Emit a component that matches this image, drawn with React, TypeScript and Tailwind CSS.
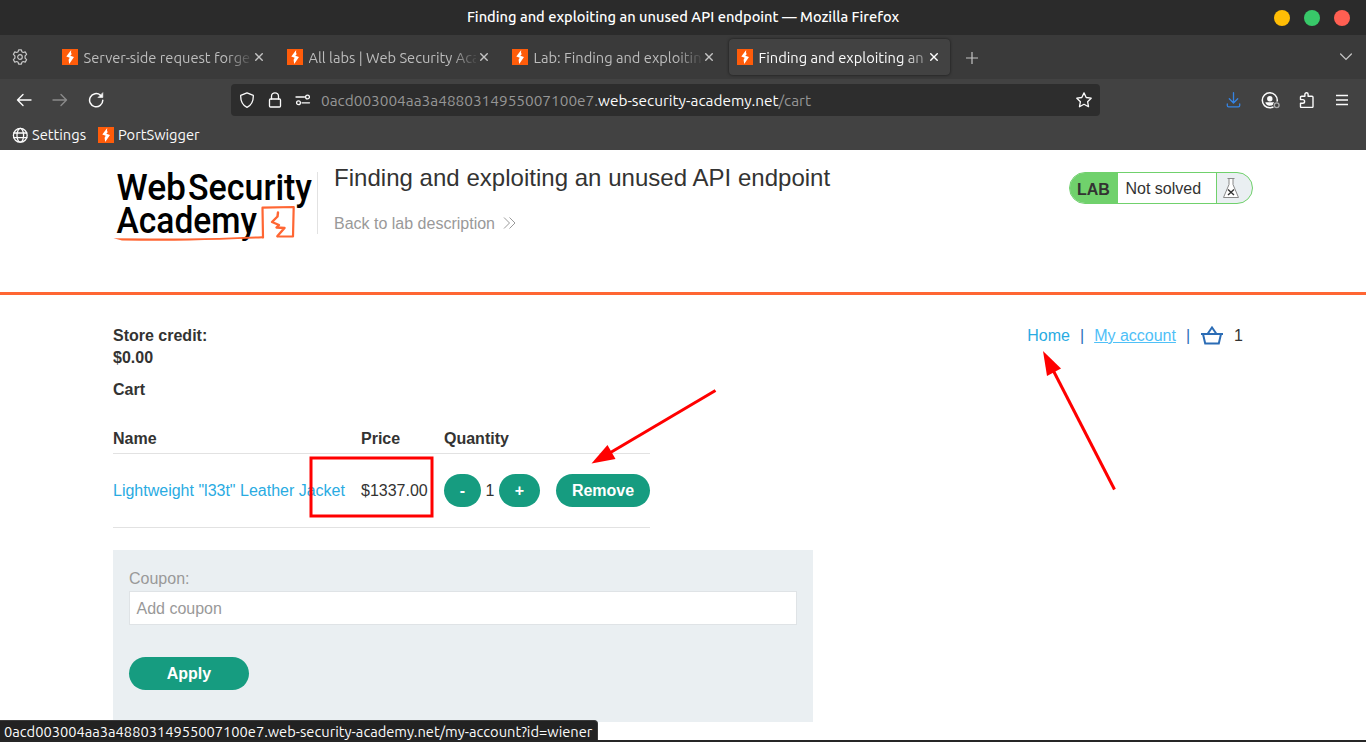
import type { ReactNode } from 'react';

const UI = "font-['Ubuntu','Noto_Sans',sans-serif]";

function SwiggerIcon() {
  return (
    <svg width="16" height="16" viewBox="0 0 16 16" className="shrink-0">
      <rect width="16" height="16" fill="#ff5c0a" />
      <path d="M9.200 1 4.300 7.600 7.700 8.800 6.600 10.800 7.200 15 12 8 8.300 6.800 9.700 5.200 9 3.600Z" fill="#fff" />
    </svg>
  );
}

function CloseIcon({ active = false }: { active?: boolean }) {
  return (
    <svg width="8" height="8" viewBox="0 0 8 8" className="shrink-0" stroke={active ? '#fff' : '#c4c4c4'} strokeWidth="1.4">
      <path d="M0.3 0.3 7.7 7.7M7.7 0.3 0.3 7.7" />
    </svg>
  );
}

function Tab({ title }: { title: string }) {
  return (
    <div className="flex h-9 w-[225px] shrink-0 items-center pl-2">
      <SwiggerIcon />
      <span className="ml-[5.5px] w-[167px] overflow-hidden whitespace-nowrap pt-[2px] text-[14.667px] leading-5 text-[#bdbdbd] [mask-image:linear-gradient(to_right,#000_142px,transparent_170px)]">{title}</span>
      <span className="ml-[4.5px] flex"><CloseIcon /></span>
    </div>
  );
}

function Icon({ size = 16, children, color = '#fbfbfb', sw = 1.4 }: { size?: number; children: ReactNode; color?: string; sw?: number }) {
  return (
    <svg width={size} height={size} viewBox="0 0 16 16" fill="none" stroke={color} strokeWidth={sw} strokeLinecap="round" strokeLinejoin="round" className="shrink-0">
      {children}
    </svg>
  );
}

function Chrome() {
  return (
    <header className={`${UI} shrink-0 bg-[#424242]`}>
      <div className="flex h-[35px] items-center bg-[#2b2b2b]">
        <div className="flex-1 pl-4" />
        <div className="whitespace-nowrap pb-px text-[14.667px] font-medium leading-5 text-white">Finding and exploiting an unused API endpoint — Mozilla Firefox</div>
        <div className="flex flex-1 justify-end gap-[14px] pr-4">
          <i className="size-4 rounded-full bg-[#ffbd05]" />
          <i className="size-4 rounded-full bg-[#38c869]" />
          <i className="size-4 rounded-full bg-[#ff5f52]" />
        </div>
      </div>

      <div className="flex h-11 items-center bg-[#3a3a3a] pl-3">
        <Icon color="#c8c8c8" sw={1.2}>
          <path d="M6.6.8h2.8l.5 2 1.3.7 2-.6 1.4 2.4-1.5 1.5v2.4l1.5 1.5-1.4 2.4-2-.6-1.3.7-.5 2H6.600l-.5-2-1.300-.7-2 .6-1.400-2.400 1.500-1.500V6.800L1.400 5.300l1.400-2.400 2 .6 1.300-.7z" />
          <circle cx="8" cy="8" r="2.300" />
        </Icon>
        <div className="ml-[26px] flex items-center">
          <Tab title="Server-side request forgery" />
          <Tab title="All labs | Web Security Academy" />
          <Tab title="Lab: Finding and exploiting an" />
          <div className="flex h-9 w-[221px] items-center rounded bg-[#424242] pl-2 shadow-[0_0_3px_rgba(0,0,0,0.6)]">
            <SwiggerIcon />
            <span className="ml-[5.5px] w-[167px] overflow-hidden whitespace-nowrap pt-[2px] text-[14.667px] leading-5 text-[#fbfbfb] [mask-image:linear-gradient(to_right,#000_142px,transparent_180px)]">Finding and exploiting an</span>
            <span className="ml-[4.5px] flex"><CloseIcon active /></span>
          </div>
        </div>
        <svg width="12" height="12" viewBox="0 0 12 12" stroke="#c4c4c4" strokeWidth="1.200" className="ml-4 mt-px"><path d="M6 0v12M0 6h12" /></svg>
        <svg width="12" height="8" viewBox="0 0 12 8" fill="none" stroke="#c4c4c4" strokeWidth="1.300" strokeLinecap="round" className="ml-auto mr-[14px]"><path d="M.6 1 6 6.400 11.400 1" /></svg>
      </div>

      <div className="flex h-[42px] items-center pl-4">
        <Icon><path d="M15 8H1.500M7 2.500 1.500 8 7 13.500" /></Icon>
        <span className="ml-5 flex"><Icon color="#8a8a8a"><path d="M1 8h13.500M9 2.500 14.500 8 9 13.500" /></Icon></span>
        <span className="ml-5 flex">
          <Icon sw={1.500}><path d="M14.800 8.300A6.600 6.600 0 1 1 12.500 3.200" /><path d="M14.800 1v4.500H10.300z" fill="#fbfbfb" strokeWidth=".6" /></Icon>
        </span>
        <div className="ml-[127px] flex h-8 w-[869px] items-center rounded bg-[#2d2d2d] pl-2 pr-2">
          <Icon sw={1.300}><path d="M8 .9 14.300 3.400C14.500 9 12 13.300 8 15.300 4 13.300 1.500 9 1.700 3.400z" /></Icon>
          <span className="ml-3 flex"><Icon sw={1.300}><rect x="2.500" y="7" width="11" height="8" rx="1" /><path d="M4.500 7V4.300a3.500 3.500 0 0 1 7 0V7" /></Icon></span>
          <span className="ml-3 flex"><Icon sw={1.300}><path d="M1 5h8.500M7 10.800h7.500" /><circle cx="12.500" cy="5" r="1.900" /><circle cx="3.500" cy="10.800" r="1.900" /></Icon></span>
          <div className="ml-[10px] whitespace-nowrap pt-px text-[15.4px] leading-5 text-[#969696]">0acd003004aa3a4880314955007100e7.<span className="text-[#fbfbfb]">web-security-academy.net</span>/cart</div>
          <span className="ml-auto flex"><Icon sw={1.300}><path d="M8 .9l2.200 4.600 5 .7-3.600 3.500.9 5L8 12.300l-4.500 2.400.9-5L.8 6.200l5-.7z" /></Icon></span>
        </div>
        <div className="ml-auto flex items-center pr-[17px]">
          <Icon color="#3584e4" sw={1.300}><path d="M7.500 .7v10.200M3.300 6.800 7.500 11l4.200-4.200M1.300 12v1.500q0 1.300 1.300 1.300h9.800q1.300 0 1.300-1.300V12" /></Icon>
          <svg width="19" height="17" viewBox="0 0 19 17" fill="none" className="ml-[19px]">
            <circle cx="8.800" cy="8.300" r="7.500" stroke="#fbfbfb" strokeWidth="1.500" />
            <circle cx="8.800" cy="6.700" r="2.700" fill="#fbfbfb" />
            <path d="M4.300 10.300h9c-.5 2.300-2 3.400-4.500 3.400s-4-1.100-4.500-3.400z" fill="#fbfbfb" />
            <circle cx="15.700" cy="13.200" r="3.600" fill="#424242" />
            <circle cx="15.700" cy="13.200" r="2.400" stroke="#aaa" strokeWidth="1.300" />
          </svg>
          <span className="ml-[19px] flex"><Icon><path d="M1.500 5.300q0-1 1-1h3.400V2.300a1.600 1.600 0 0 1 3.200 0v2h3.900q1 0 1 1v9.100q0 1-1 1H2.500q-1 0-1-1V11.200h2.300a1.800 1.800 0 0 0 0-3.600H1.500z" /></Icon></span>
          <svg width="12" height="12" viewBox="0 0 12 12" stroke="#fbfbfb" strokeWidth="1.300" className="ml-[21px] mr-px"><path d="M0 1.500h12M0 6h12M0 10.500h12" /></svg>
        </div>
      </div>

      <div className="flex h-[29px] items-center pb-px pl-[12px] text-[14.667px] leading-5 text-[#fbfbfb]">
        <Icon sw={1.300}><circle cx="8.300" cy="8.300" r="6.900" /><ellipse cx="8.300" cy="8.300" rx="3.300" ry="6.900" /><path d="M1.700 6h13.200M1.700 10.700h13.200" /></Icon>
        <span className="ml-1 w-[66px] whitespace-nowrap">Settings</span>
        <SwiggerIcon />
        <span className="ml-1 whitespace-nowrap">PortSwigger</span>
      </div>
    </header>
  );
}

function Logo() {
  return (
    <svg width="204" height="76" viewBox="113 168 204 76" className="block shrink-0">
      <g fill="#000" className="font-['Roboto',sans-serif] font-medium" fontSize="37">
        <text x="116.500" y="200.200" textLength="69.500" lengthAdjust="spacingAndGlyphs">Web</text>
        <text x="188" y="200.200" textLength="124" lengthAdjust="spacingAndGlyphs">Security</text>
        <text x="116.500" y="233.200" textLength="140.500" lengthAdjust="spacingAndGlyphs">Academy</text>
      </g>
      <g fill="none" stroke="#ff6633" strokeLinejoin="round" strokeLinecap="round">
        <path d="M263 237.500 262.500 207.700 293.700 207 293 236.500 277.500 236.500" strokeWidth="2.200" />
        <path d="M278 212.500 277.500 216.500 272 222 279 225 276.500 227.500 284.500 228 277.500 236" strokeWidth="2.400" />
      </g>
      <path d="M113.500 238.300Q150 238.500 185 238.500T262 236.200L263.500 238.200Q220 239.700 190 240.400T122 240.400Z" fill="#ff6633" />
    </svg>
  );
}

function LabStatus() {
  return (
    <div className="flex h-8 w-[184px] overflow-hidden rounded-full border border-[#70d16c] bg-[#eaeff2] text-[16px] leading-[31px] text-[#333332]">
      <b className="w-12 bg-[#70d16c] pl-[7px] pt-px">LAB</b>
      <span className="w-[99px] border-r border-[#70d16c] bg-white pl-[7.5px]">Not solved</span>
      <svg width="18" height="22" viewBox="0 0 18 22" fill="none" stroke="#888" strokeWidth="1" className="ml-[5px] mt-1">
        <path d="M5.500 1.500h7M7 1.500v6L1.500 20.500h15L11 7.500v-6" fill="#fff" />
        <path d="M6 12.500l6 5.500M12 12.500 6 18" stroke="#333" strokeWidth="1.400" />
      </svg>
    </div>
  );
}

function Pill({ children, w }: { children: ReactNode; w: string }) {
  return <button className={`h-[33px] rounded-full bg-[#169c80] text-center text-[16px] font-bold leading-[33px] text-white ${w}`}>{children}</button>;
}

function Annotations() {
  return (
    <svg width="1366" height="742" viewBox="0 0 1366 742" fill="none" className="pointer-events-none absolute left-0 top-0">
      <rect x="311" y="458" width="121" height="58" stroke="#f00" strokeWidth="3" />
      <path d="M715.500 390.500 608 454" stroke="#f00" strokeWidth="3" />
      <path d="M591.500 463.500 607.500 445 615.500 459Z" fill="#f00" />
      <path d="M1114.500 489.500 1053 370" stroke="#f00" strokeWidth="3" />
      <path d="M1043 351 1061 368.500 1047 376Z" fill="#f00" />
    </svg>
  );
}

export default function App() {
  return (
    <div className="relative flex h-[742px] w-[1366px] flex-col overflow-hidden bg-white font-['Liberation_Sans',Arial,sans-serif] text-[16px] text-[#333332]">
      <Chrome />
      <section className="flex h-[145px] shrink-0 items-start border-b-[3px] border-[#ff6633] pl-[113px] pr-[113px] pt-[18px]">
        <Logo />
        <div className="mt-1 h-[62px] border-l border-[#e2e2e2] pl-4">
          <h1 className="-mt-2 text-[24px] leading-[28px] tracking-[0.025px]">Finding and exploiting an unused API endpoint</h1>
          <a className="mt-[22px] flex items-center text-[16px] leading-5 text-[#999]">
            Back to lab description
            <svg width="13" height="12" viewBox="0 0 13 12" fill="none" stroke="#999" strokeWidth="1" className="mb-[2px] ml-2"><path d="M1 .5 6.500 6 1 11.500M6.500.5 12 6l-5.500 5.500" /></svg>
          </a>
        </div>
        <div className="ml-auto mt-1"><LabStatus /></div>
      </section>

      <main className="flex justify-between pl-[113px] pr-[123px] pt-[30px]">
        <div className="w-[700px]">
          <div className="font-bold leading-[22px]">
            <p>Store credit:</p>
            <p>$0.00</p>
            <p className="mt-[10px]">Cart</p>
          </div>
          <div className="mt-[23px] w-[537px]">
            <div className="flex h-[30px] border-b border-[#e2e2e2] pt-[5px] font-bold leading-[20px]">
              <span className="w-[248px]">Name</span>
              <span className="w-[83px]">Price</span>
              <span>Quantity</span>
            </div>
            <div className="flex h-[74px] items-center border-b border-[#e2e2e2]">
              <a className="w-[248px] whitespace-nowrap text-[#29abe2]">Lightweight "l33t" Leather Jacket</a>
              <span className="w-[83px]">$1337.00</span>
              <Pill w="w-[37px]">-</Pill>
              <span className="w-[18px] text-center">1</span>
              <Pill w="w-[41px]">+</Pill>
              <span className="ml-4 flex"><Pill w="w-[94px]">Remove</Pill></span>
            </div>
          </div>
          <form className="mt-[22px] h-[172px] bg-[#eaeff2] px-4 pt-[18px]">
            <label className="block leading-[22px] text-[#999]">Coupon:</label>
            <div className="mt-px h-[34px] border border-[#dfe3e6] bg-white pl-[6.500px] leading-[33px] text-[#999]">Add coupon</div>
            <div className="mt-8 flex"><Pill w="w-[120px]">Apply</Pill></div>
          </form>
        </div>
        <nav className="flex h-[22px] items-center leading-[22px]">
          <a className="text-[#29abe2]">Home</a>
          <span className="ml-[10px] text-[#2d6fb8]">|</span>
          <a className="ml-[10px] text-[#4fc0f7] underline">My account</a>
          <span className="ml-[10px] text-[#2d6fb8]">|</span>
          <svg width="22" height="19" viewBox="0 0 22 19" fill="none" stroke="#2b6cb5" strokeWidth="2" className="-mt-px ml-[11px]">
            <path d="M0 8h22M2 8l2.200 9.500h13.600L20 8M6.500 8 11 1.500 15.500 8" />
          </svg>
          <span className="ml-[11px]">1</span>
        </nav>
      </main>

      <Annotations />
      <div className="absolute bottom-0 left-0 h-[2px] w-full bg-[#262626]" />
      <div className={`${UI} absolute bottom-[2px] left-0 h-5 w-[598px] whitespace-nowrap rounded-tr border-r border-t border-[#3a3a3a] bg-[#222] pl-1 pt-px text-[14.667px] leading-[20px] text-[#fbfbfb]`}>0acd003004aa3a4880314955007100e7.web-security-academy.net/my-account?id=wiener</div>
    </div>
  );
}
